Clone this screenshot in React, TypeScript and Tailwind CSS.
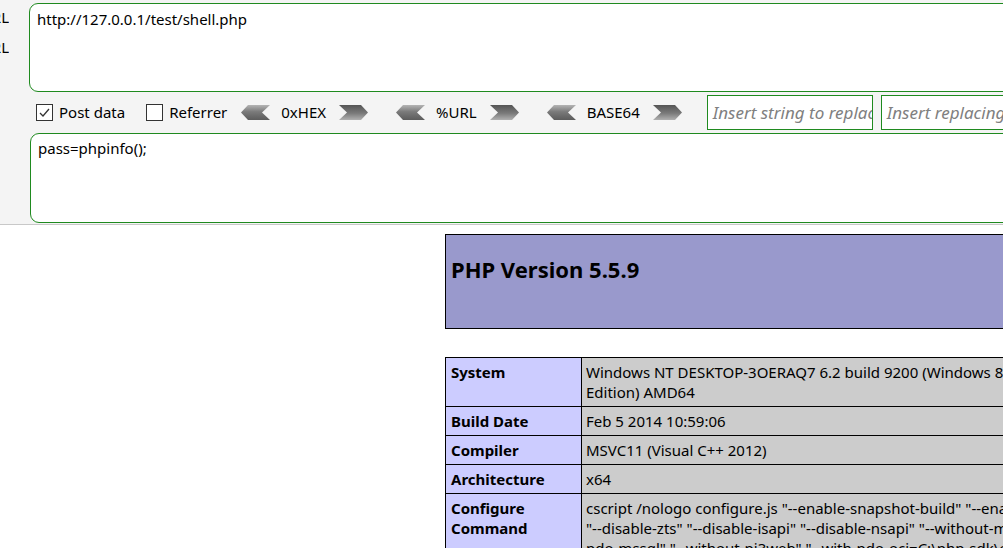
import React from "react";

const font = { fontFamily: '"Noto Sans", "Open Sans", Arial, sans-serif' };

const ArrowLeft = ({ id }: { id: string }) => (
  <svg width="29" height="15" viewBox="0 0 29 15" className="shrink-0">
    <defs>
      <linearGradient id={id} x1="0" y1="0" x2="0" y2="1">
        <stop offset="0" stopColor="#b4b4b4" />
        <stop offset="0.45" stopColor="#7a7a7a" />
        <stop offset="1" stopColor="#5c5c5c" />
      </linearGradient>
    </defs>
    <polygon points="0,7.5 7,0 29,0 21,7.5 29,15 7,15" fill={`url(#${id})`} />
  </svg>
);

const ArrowRight = ({ id }: { id: string }) => (
  <svg width="29" height="15" viewBox="0 0 29 15" className="shrink-0">
    <defs>
      <linearGradient id={id} x1="0" y1="0" x2="0" y2="1">
        <stop offset="0" stopColor="#555" />
        <stop offset="0.55" stopColor="#7a7a7a" />
        <stop offset="1" stopColor="#b0b0b0" />
      </linearGradient>
    </defs>
    <polygon points="0,0 22,0 29,7.5 22,15 0,15 8,7.5" fill={`url(#${id})`} />
  </svg>
);

const Checkbox = ({ checked }: { checked?: boolean }) => (
  <span className="w-[17px] h-[17px] border border-[#333] bg-white flex items-center justify-center shrink-0">
    {checked && (
      <svg width="13" height="13" viewBox="0 0 13 13">
        <path d="M2 7 L5 10 L11 3" stroke="#333" strokeWidth="1.3" fill="none" />
      </svg>
    )}
  </span>
);

const Encoder = ({ label, n }: { label: string; n: number }) => (
  <div className="flex items-center">
    <ArrowLeft id={`gl${n}`} />
    <span className="pl-[11px] pr-[13px] text-[15px] text-black">{label}</span>
    <ArrowRight id={`gr${n}`} />
  </div>
);

const rows: { k: React.ReactNode; v: React.ReactNode }[] = [
  {
    k: "System",
    v: (
      <>
        Windows NT DESKTOP-3OERAQ7 6.2 build 9200 (Windows 8 Business
        <br />
        Edition) AMD64
      </>
    ),
  },
  { k: "Build Date", v: "Feb 5 2014 10:59:06" },
  { k: "Compiler", v: "MSVC11 (Visual C++ 2012)" },
  { k: "Architecture", v: "x64" },
  {
    k: (
      <>
        Configure
        <br />
        Command
      </>
    ),
    v: (
      <>
        cscript /nologo configure.js "--enable-snapshot-build" "--enable-debug-pack"
        <br />
        "--disable-zts" "--disable-isapi" "--disable-nsapi" "--without-mssql" "--without-
        <br />
        pdo-mssql" "--without-pi3web" "--with-pdo-oci=C:\php-sdk\oracle\x64\instantclient_12_1\sdk,shared"
      </>
    ),
  },
];

export default function App() {
  return (
    <div className="w-[1003px] h-[548px] overflow-hidden bg-white" style={font}>
      {/* toolbar panel */}
      <div className="h-[225px] bg-[#f4f4f4] border-b border-[#c8c8c8] flex">
        <div className="w-[29px] shrink-0 flex flex-col pt-[7px] gap-[10px] overflow-hidden">
          <div className="w-[9px] overflow-hidden flex justify-end text-[15px] leading-[20px] text-black whitespace-nowrap">
            <span>Load URL</span>
          </div>
          <div className="w-[9px] overflow-hidden flex justify-end text-[15px] leading-[20px] text-black whitespace-nowrap">
            <span>Split URL</span>
          </div>
        </div>
        <div className="flex-1 flex flex-col mr-[-40px] pt-[3px]">
          <div className="h-[89px] bg-white border border-[#1f8a1f] rounded-[9px] px-[7px] pt-[4px] text-[15px] text-black">
            http://127.0.0.1/test/shell.php
          </div>
          <div className="h-[41px] flex items-center text-[15px] text-black whitespace-nowrap">
            <label className="flex items-center gap-[6px] ml-[7px]">
              <Checkbox checked />
              <span>Post data</span>
            </label>
            <label className="flex items-center gap-[6px] ml-[21px]">
              <Checkbox />
              <span>Referrer</span>
            </label>
            <div className="flex items-center gap-[28px] ml-[14px]">
              <Encoder label="0xHEX" n={1} />
              <Encoder label="%URL" n={2} />
              <Encoder label="BASE64" n={3} />
            </div>
            <div className="ml-[25px] w-[166px] h-[35px] border border-[#1f8a1f] bg-white pl-[5px] flex items-center overflow-hidden italic text-[17px] text-[#808080]">
              Insert string to replace
            </div>
            <div className="ml-[8px] w-[200px] h-[35px] border border-[#1f8a1f] bg-white pl-[5px] flex items-center overflow-hidden italic text-[17px] text-[#808080]">
              Insert replacing string
            </div>
          </div>
          <div className="h-[90px] ml-[1px] bg-white border border-[#1f8a1f] rounded-[9px] px-[7px] pt-[3px] text-[15px] text-black">
            pass=phpinfo();
          </div>
        </div>
      </div>

      {/* phpinfo output */}
      <div className="ml-[445px] mt-[9px] w-[720px]">
        <div className="h-[95px] bg-[#9999cc] border border-black px-[5px] pt-[19px]">
          <h1 className="text-[22px] leading-[30px] font-bold text-black">PHP Version 5.5.9</h1>
        </div>
        <table className="mt-[28px] w-[720px] table-fixed border-collapse text-[15px] leading-[20px] text-black">
          <colgroup>
            <col className="w-[136px]" />
            <col />
          </colgroup>
          <tbody>
            {rows.map((r, i) => (
              <tr key={i}>
                <td className="bg-[#ccccff] border border-black font-bold align-top px-[5px] py-[4px]">
                  {r.k}
                </td>
                <td className="bg-[#cccccc] border border-black align-top px-[4px] py-[4px] whitespace-nowrap overflow-hidden">
                  {r.v}
                </td>
              </tr>
            ))}
          </tbody>
        </table>
      </div>
    </div>
  );
}
